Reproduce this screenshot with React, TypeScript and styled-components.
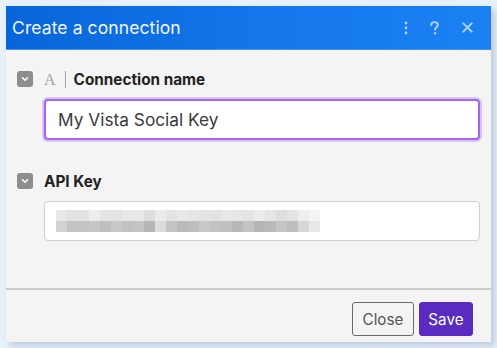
import React from "react";
import styled, { createGlobalStyle } from "styled-components";

const GlobalStyle = createGlobalStyle`
  html, body {
    margin: 0;
    padding: 0;
    background: #e8f0fc;
    font-family: Inter, "Noto Sans", "Liberation Sans", sans-serif;
  }
`;

const Page = styled.div`
  width: 497px;
  height: 348px;
  padding: 6px 6px 0 6px;
  box-sizing: border-box;
`;

const Dialog = styled.div`
  width: 485px;
  height: 336px;
  background: #f4f4f4;
  display: flex;
  flex-direction: column;
  box-shadow: 4px 4px 6px rgba(140, 160, 190, 0.45);
`;

const Header = styled.div`
  height: 43px;
  flex-shrink: 0;
  display: flex;
  align-items: center;
  justify-content: space-between;
  padding: 0 18px 0 6px;
  background: linear-gradient(90deg, #0765d9 0%, #1477ec 55%, #1a81f3 100%);
  border-bottom: 1px solid #3f95f3;
`;

const Title = styled.h1`
  margin: 0;
  font-size: 17.5px;
  font-weight: 400;
  color: #f2f6fd;
  letter-spacing: 0.1px;
`;

const HeaderTools = styled.div`
  display: flex;
  align-items: center;
  color: rgba(255, 255, 255, 0.66);
`;

const ToolIcon = styled.span<{ $space?: number }>`
  width: 12px;
  height: 18px;
  margin-left: ${(p) => p.$space ?? 0}px;
  display: flex;
  align-items: center;
  justify-content: center;
`;

const Body = styled.div`
  flex: 1;
  padding: 21px 11px 0 11px;
  display: flex;
  flex-direction: column;
`;

const Field = styled.div<{ $gap: number }>`
  display: flex;
  flex-direction: column;
  margin-bottom: ${(p) => p.$gap}px;
`;

const LabelRow = styled.div`
  display: flex;
  align-items: center;
  height: 16px;
  margin-bottom: 12px;
`;

const Toggle = styled.span`
  width: 16px;
  height: 16px;
  border-radius: 3px;
  background: #8d8d8d;
  display: flex;
  align-items: center;
  justify-content: center;
  margin-right: 11px;
`;

const TypeGlyph = styled.span`
  font-family: "Liberation Serif", "DejaVu Serif", serif;
  font-size: 16px;
  color: #a6a6a6;
  padding-right: 9px;
  border-right: 1px solid #a8a8a8;
  line-height: 17px;
  margin-right: 8px;
`;

const Label = styled.span`
  font-size: 15.3px;
  font-weight: 700;
  color: #222;
`;

const Input = styled.div<{ $focused?: boolean }>`
  margin-left: 27px;
  height: ${(p) => (p.$focused ? 41 : 40)}px;
  box-sizing: border-box;
  background: #fff;
  border-radius: 4px;
  border: ${(p) => (p.$focused ? "2px solid #a862f5" : "1px solid #cfcfcf")};
  box-shadow: ${(p) => (p.$focused ? "0 0 0 2px rgba(180, 140, 240, 0.45)" : "none")};
  display: flex;
  align-items: center;
  padding-left: ${(p) => (p.$focused ? 12 : 11)}px;
  font-size: 17.3px;
  color: #3a3a3a;
`;

const Blurred = styled.div`
  display: flex;
  flex-direction: column;
  filter: blur(0.6px);
`;

const BlurRow = styled.div`
  display: flex;
  height: 11px;
`;

const Block = styled.span<{ $tone: number }>`
  width: 11px;
  height: 11px;
  background: ${(p) => `rgb(${p.$tone}, ${p.$tone}, ${p.$tone + 2})`};
`;

const Footer = styled.div`
  height: 54px;
  flex-shrink: 0;
  box-sizing: border-box;
  border-top: 2px solid #cbcbcb;
  display: flex;
  align-items: center;
  justify-content: flex-end;
  gap: 5px;
  padding: 6px 18px 0 0;
`;

const Button = styled.button<{ $primary?: boolean }>`
  height: 34px;
  padding: 0 ${(p) => (p.$primary ? 8.5 : 9.5)}px;
  border-radius: 3px;
  font-family: Inter, "Noto Sans", "Liberation Sans", sans-serif;
  font-size: 15.2px;
  cursor: pointer;
  border: ${(p) => (p.$primary ? "1px solid #5a2bc0" : "1px solid #6a6a6a")};
  background: ${(p) => (p.$primary ? "#5a2bc0" : "#f4f4f4")};
  color: ${(p) => (p.$primary ? "#ffffff" : "#555")};
`;

const topTones = [232, 226, 226, 236, 228, 228, 232, 232, 222, 236, 228, 232, 230, 228, 226, 232, 230, 228, 236, 230, 222, 228, 238, 244];
const bottomTones = [210, 196, 196, 198, 190, 200, 194, 196, 182, 220, 196, 186, 190, 200, 196, 192, 184, 196, 182, 186, 196, 190, 214, 232];

const Chevron = () => (
  <svg width="10" height="10" viewBox="0 0 10 10">
    <path d="M2.5 3.8 L5 6.3 L7.5 3.8" fill="none" stroke="#fff" strokeWidth="1.6" strokeLinecap="round" strokeLinejoin="round" />
  </svg>
);

const App: React.FC = () => {
  return (
    <>
      <GlobalStyle />
      <Page>
        <Dialog>
          <Header>
            <Title>Create a connection</Title>
            <HeaderTools>
              <ToolIcon>
                <svg width="4" height="14" viewBox="0 0 4 14">
                  <circle cx="2" cy="2" r="1.4" fill="currentColor" />
                  <circle cx="2" cy="7" r="1.4" fill="currentColor" />
                  <circle cx="2" cy="12" r="1.4" fill="currentColor" />
                </svg>
              </ToolIcon>
              <ToolIcon $space={16}>
                <svg width="9" height="14" viewBox="0 0 9 14">
                  <path d="M1.2 4.2 C1.2 2.1 2.7 1.1 4.5 1.1 C6.5 1.1 7.8 2.2 7.8 4 C7.8 6.1 5.1 6.4 5.1 8.6" fill="none" stroke="currentColor" strokeWidth="1.9" strokeLinecap="round" />
                  <circle cx="5.1" cy="12.3" r="1.2" fill="currentColor" />
                </svg>
              </ToolIcon>
              <ToolIcon $space={21}>
                <svg width="11" height="11" viewBox="0 0 11 11">
                  <path d="M1.3 1.3 L9.7 9.7 M9.7 1.3 L1.3 9.7" stroke="currentColor" strokeWidth="1.9" strokeLinecap="round" />
                </svg>
              </ToolIcon>
            </HeaderTools>
          </Header>

          <Body>
            <Field $gap={33}>
              <LabelRow>
                <Toggle>
                  <Chevron />
                </Toggle>
                <TypeGlyph>A</TypeGlyph>
                <Label>Connection name</Label>
              </LabelRow>
              <Input $focused>My Vista Social Key</Input>
            </Field>

            <Field $gap={0}>
              <LabelRow>
                <Toggle>
                  <Chevron />
                </Toggle>
                <Label>API Key</Label>
              </LabelRow>
              <Input>
                <Blurred>
                  <BlurRow>
                    {topTones.map((t, i) => (
                      <Block key={i} $tone={t} />
                    ))}
                  </BlurRow>
                  <BlurRow>
                    {bottomTones.map((t, i) => (
                      <Block key={i} $tone={t} />
                    ))}
                  </BlurRow>
                </Blurred>
              </Input>
            </Field>
          </Body>

          <Footer>
            <Button>Close</Button>
            <Button $primary>Save</Button>
          </Footer>
        </Dialog>
      </Page>
    </>
  );
};

export default App;
